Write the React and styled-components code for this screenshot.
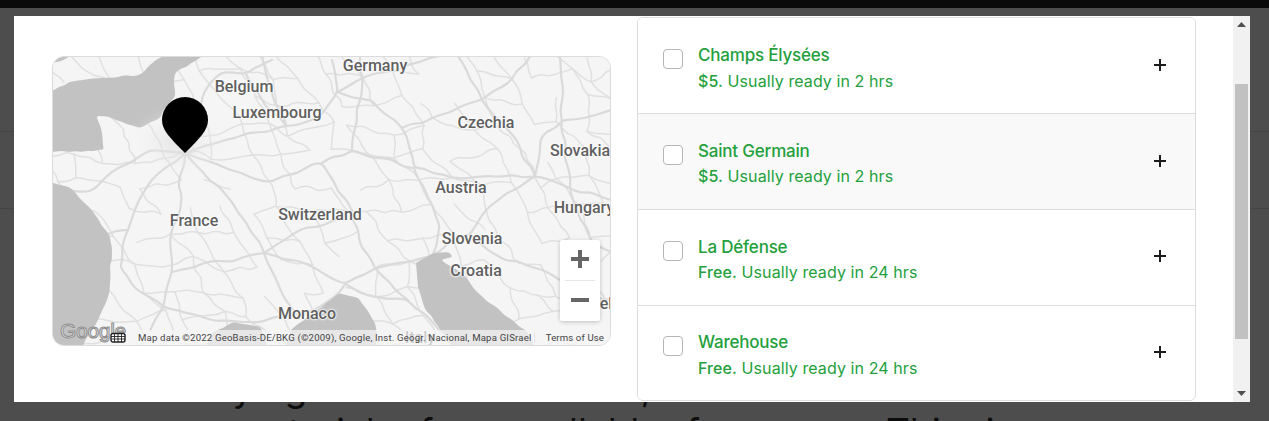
import React from "react";
import styled, { createGlobalStyle } from "styled-components";

const Global = createGlobalStyle`
  html, body { margin: 0; padding: 0; height: 100%; background: #4d4d4d; overflow: hidden; }
  #root { height: 100%; }
  * { box-sizing: border-box; }
`;

const Page = styled.div`
  position: relative;
  height: 421px;
  width: 1269px;
  overflow: hidden;
  background: #4d4d4d;
  font-family: Inter, "Liberation Sans", sans-serif;
`;
const TopBar = styled.div`
  height: 8px;
  background: #0a0a0a;
`;
const BackSection = styled.div`
  height: ${(p) => p.$h}px;
  border-bottom: 1px solid #444;
`;
const BackText = styled.div`
  font-size: 37px;
  line-height: 44px;
  color: #0d0d0d;
  white-space: nowrap;
  padding-left: ${(p) => p.$indent}px;
  word-spacing: ${(p) => p.$spread}px;
`;
const BackCopy = styled.div`
  padding-top: 157px;
`;

const Modal = styled.div`
  position: absolute;
  left: 14px;
  top: 16px;
  width: 1236px;
  height: 386px;
  background: #fff;
  display: flex;
`;
const Body = styled.div`
  flex: 1;
  display: flex;
  align-items: flex-start;
  gap: 26px;
  padding: 1px 37px 0 38px;
`;

const MapFrame = styled.div`
  position: relative;
  width: 559px;
  height: 290px;
  margin-top: 39px;
  flex: none;
  border: 1px solid #dcdcdc;
  border-radius: 12px;
  overflow: hidden;
  background: #f5f5f5;
`;
const MapArt = styled.svg`
  position: absolute;
  left: -1px;
  top: -1px;
  display: block;
`;
const MapLabel = styled.span`
  position: absolute;
  left: ${(p) => p.$x - 53}px;
  top: ${(p) => p.$y - 57}px;
  transform: translate(-50%, -50%);
  font-family: Roboto, sans-serif;
  font-weight: 500;
  font-size: 16px;
  line-height: 18px;
  color: #5f5f5f;
  white-space: nowrap;
  text-shadow: 0 0 2px #fff, 0 0 2px #fff, 0 0 3px #fff;
`;
const GoogleMark = styled.span`
  position: absolute;
  left: 7px;
  bottom: 2px;
  font-family: "Liberation Sans", sans-serif;
  font-size: 21px;
  line-height: 24px;
  font-weight: 400;
  letter-spacing: -0.3px;
  color: #e6e6e6;
  -webkit-text-stroke: 1px #8e8e8e;
`;
const Attribution = styled.div`
  position: absolute;
  right: 0;
  bottom: 0;
  height: 15px;
  width: 480px;
  padding: 0 6px 0 8px;
  background: rgba(245, 245, 245, 0.72);
  display: flex;
  align-items: center;
  justify-content: space-between;
  font-family: Roboto, sans-serif;
  font-size: 9.6px;
  letter-spacing: 0.18px;
  color: #444;
  white-space: nowrap;
`;
const TermsLink = styled.span`
  padding-left: 11px;
  letter-spacing: 0.12px;
  border-left: 1px solid #e4e4e4;
`;
const Keyboard = styled.svg`
  position: absolute;
  left: 57px;
  bottom: 2px;
`;
const ZoomControl = styled.div`
  position: absolute;
  left: 507px;
  top: 183px;
  width: 40px;
  height: 81px;
  background: #fff;
  border-radius: 2px;
  box-shadow: 0 1px 4px rgba(0, 0, 0, 0.22);
  display: flex;
  flex-direction: column;
  align-items: center;
`;
const ZoomButton = styled.div`
  height: 40px;
  width: 100%;
  padding-bottom: 2px;
  display: flex;
  align-items: center;
  justify-content: center;
  flex: none;
`;
const ZoomDivider = styled.div`
  width: 30px;
  height: 1px;
  background: #e6e6e6;
  flex: none;
`;

const List = styled.div`
  flex: 1;
  height: 384px;
  border: 1px solid #dcdcdc;
  border-radius: 6px;
  overflow: hidden;
`;
const Row = styled.div`
  height: 96px;
  display: flex;
  align-items: flex-start;
  padding: ${(p) => p.$top}px 29px 0 25px;
  background: ${(p) => (p.$shaded ? "#f9f9f9" : "#fff")};
  border-bottom: 1px solid #dcdcdc;
  &:last-child { border-bottom: 0; }
`;
const Check = styled.span`
  width: 20px;
  height: 20px;
  flex: none;
  margin-top: 6px;
  margin-right: 15px;
  border: 1px solid #b5b5b5;
  border-radius: 4px;
  background: #fff;
`;
const RowText = styled.div`
  flex: 1;
  color: #23a03c;
`;
const RowTitle = styled.div`
  font-size: 17px;
  line-height: 24px;
  font-weight: 500;
  letter-spacing: -0.2px;
`;
const RowSub = styled.div`
  font-size: 16px;
  line-height: 26px;
  letter-spacing: 0.09px;
  margin-top: ${(p) => p.$gap}px;
`;
const Price = styled.span`
  font-weight: 500;
`;
const Plus = styled.svg`
  flex: none;
  margin-top: ${(p) => p.$offset}px;
`;

const Scrollbar = styled.div`
  width: 17px;
  flex: none;
  height: 100%;
  background: #f1f1f1;
  display: flex;
  flex-direction: column;
  align-items: center;
  position: relative;
`;
const ArrowZone = styled.div`
  height: 17px;
  width: 100%;
  flex: none;
  display: flex;
  align-items: center;
  justify-content: center;
`;
const Track = styled.div`
  flex: 1;
  width: 100%;
  padding: 51px 2px 46px;
`;
const Thumb = styled.div`
  height: 100%;
  background: #c1c1c1;
`;

/* map drawing helpers: organic, seeded roads and coast lines */
let seed = 7;
const rnd = () => {
  seed = (seed * 16807) % 2147483647;
  return seed / 2147483647;
};
const wiggle = (pts, amp, step) => {
  const out = [pts[0]];
  for (let i = 1; i < pts.length; i++) {
    const [ax, ay] = pts[i - 1];
    const [bx, by] = pts[i];
    const len = Math.hypot(bx - ax, by - ay);
    const n = Math.max(1, Math.round(len / step));
    for (let k = 1; k <= n; k++) {
      const t = k / n;
      const j = k === n ? 0 : (rnd() - 0.5) * 2 * amp;
      out.push([ax + (bx - ax) * t - ((by - ay) / (len || 1)) * j, ay + (by - ay) * t + ((bx - ax) / (len || 1)) * j]);
    }
  }
  return out;
};
const smooth = (pts, close) => {
  let d = `M${pts[0][0].toFixed(1)} ${pts[0][1].toFixed(1)}`;
  for (let i = 1; i < pts.length - 1; i++) {
    const mx = (pts[i][0] + pts[i + 1][0]) / 2;
    const my = (pts[i][1] + pts[i + 1][1]) / 2;
    d += `Q${pts[i][0].toFixed(1)} ${pts[i][1].toFixed(1)} ${mx.toFixed(1)} ${my.toFixed(1)}`;
  }
  const last = pts[pts.length - 1];
  d += `L${last[0].toFixed(1)} ${last[1].toFixed(1)}`;
  return close ? d + "Z" : d;
};
const parse = (s) =>
  s
    .split("M")
    .filter(Boolean)
    .map((sub) => sub.trim().split(" L").map((p) => p.trim().split(" ").map(Number)));
const roadsFrom = (list, amp, step) => list.flatMap(parse).map((pts) => smooth(wiggle(pts, amp, step)));

const majorData = [
  "M185 153 L180 175 L181 205 L170 238 L172 272 L164 305 L150 331",
  "M185 153 L203 172 L226 195 L246 222 L264 253 L278 284 L298 316",
  "M185 153 L160 172 L140 198 L128 230 L120 268 L140 292 L165 308 L205 318 L250 322 L298 316",
  "M185 153 L150 150 L118 168 L98 186 L82 192 L60 188",
  "M185 153 L196 120 L204 92 L222 72 L246 74 L272 60",
  "M185 153 L225 140 L258 132 L286 126 L318 118 L338 92 L332 60",
  "M286 126 L264 104 L246 74",
  "M185 153 L230 170 L272 182 L306 168 L322 163 L338 192 L352 210 L362 248 L375 268",
  "M264 253 L296 232 L330 222 L352 210",
  "M338 92 L372 100 L402 128 L414 168 L452 178 L490 176 L535 176 L570 188 L611 200",
  "M322 163 L352 150 L380 158 L414 168",
  "M402 128 L440 115 L482 100 L512 80 L530 56",
  "M482 100 L508 130 L535 176",
  "M535 176 L540 140 L562 120 L611 110",
  "M338 92 L372 74 L420 62 L440 56",
  "M264 253 L302 262 L345 284 L375 268 L410 262 L432 256 L452 238 L470 234",
  "M470 234 L498 256 L536 268 L580 290 L611 300",
  "M470 234 L490 206 L535 176",
  "M345 284 L368 296 L408 300 L440 331",
  "M375 268 L395 290 L408 300",
  "M414 168 L428 198 L440 225 L432 256",
  "M298 316 L330 300 L345 284",
  "M570 188 L590 240 L611 252",
  "M262 56 L272 92 L286 126",
  "M458 56 L470 80 L482 100",
  "M55 232 L80 240 L104 236 L128 230",
  "M172 272 L205 262 L232 262 L264 253",
  "M360 56 L362 90 L352 150",
  "M560 56 L562 120 L570 188",
];
const major = roadsFrom(majorData, 2.4, 11);

/* the secondary network: a jittered lattice of towns joined by small roads */
const buildLattice = () => {
  const sx = 30;
  const sy = 27;
  const rowsCount = 12;
  const colsCount = 20;
  const nodes = [];
  for (let r = 0; r < rowsCount; r++) {
    const line = [];
    for (let c = 0; c < colsCount; c++) {
      line.push([40 + c * sx + (r % 2 ? 15 : 0) + (rnd() - 0.5) * 20, 48 + r * sy + (rnd() - 0.5) * 16]);
    }
    nodes.push(line);
  }
  const paths = [];
  for (let r = 0; r < rowsCount; r++) {
    for (let c = 0; c < colsCount; c++) {
      if (c < colsCount - 1 && rnd() < 0.72) paths.push(smooth(wiggle([nodes[r][c], nodes[r][c + 1]], 2.6, 8)));
      if (r < rowsCount - 1 && rnd() < 0.8) {
        const to = nodes[r + 1][r % 2 ? Math.min(c + 1, colsCount - 1) : c];
        paths.push(smooth(wiggle([nodes[r][c], to], 2.6, 8)));
      }
    }
  }
  return paths;
};
const lattice = buildLattice();

const coast = (pts) => smooth(wiggle(pts, 1.1, 6), true);
const water = [
  [[212,50],[175,73],[175,97],[163,110],[161,117],[139,128],[110,117],[96,116],[102,133],[104,150],[82,152],[50,152],[50,93],[69,82],[106,78],[139,75],[169,50]],
  [[50,50],[71,50],[71,56],[62,61],[50,62]],
  [[50,182],[69,187],[92,210],[110,237],[112,247],[108,297],[98,320],[80,350],[50,350]],
  [[212,333],[233,322],[261,327],[268,350],[205,350]],
  [[290,331],[322,307],[339,293],[359,298],[375,323],[378,350],[285,350]],
  [[416,263],[433,253],[449,252],[453,257],[441,260],[461,273],[478,293],[502,313],[527,331],[535,350],[455,350],[424,307],[418,287]],
].map(coast);

function MapDrawing() {
  return (
    <MapArt width="559" height="290" viewBox="52 56 559 290">
      <defs>
        <radialGradient id="halo">
          <stop offset="0" stopColor="#dcdcdc" />
          <stop offset="1" stopColor="#f5f5f5" stopOpacity="0" />
        </radialGradient>
      </defs>
      <rect x="52" y="56" width="559" height="290" fill="#f5f5f5" />
      <g fill="none" stroke="#e0e0e0" strokeWidth="1.5" strokeLinejoin="round" strokeLinecap="round">
        {lattice.map((d, i) => (
          <path key={i} d={d} />
        ))}
      </g>
      <g fill="none" stroke="#dadada" strokeWidth="2.2" strokeLinejoin="round" strokeLinecap="round">
        {major.map((d, i) => (
          <path key={i} d={d} />
        ))}
      </g>
      <g fill="#c2c2c2">
        {water.map((d, i) => (
          <path key={i} d={d} />
        ))}
      </g>
      <ellipse cx="178" cy="142" rx="50" ry="36" fill="url(#halo)" opacity="0.7" />
      <path d="M185 153 C170 138 162 130 162 120 A23 23 0 0 1 208 120 C208 130 200 138 185 153 Z" fill="#000" />
    </MapArt>
  );
}

const labels = [
  ["Germany", 375, 66],
  ["Belgium", 244, 87],
  ["Luxembourg", 277, 113],
  ["Czechia", 486, 123],
  ["Slovakia", 580, 151],
  ["Austria", 461, 188],
  ["Hungary", 584, 208],
  ["France", 194, 221],
  ["Switzerland", 320, 215],
  ["Slovenia", 472, 239],
  ["Croatia", 476, 271],
  ["Monaco", 307, 314],
  ["Italy", 420, 338],
  ["el", 606, 304],
];

const rows = [
  { name: "Champs Élysées", price: "$5.", rest: " Usually ready in 2 hrs", top: 25, gap: 1, plus: 16 },
  { name: "Saint Germain", price: "$5.", rest: " Usually ready in 2 hrs", top: 25, gap: 0, plus: 16, shaded: true },
  { name: "La Défense", price: "Free.", rest: " Usually ready in 24 hrs", top: 25, gap: 0, plus: 15 },
  { name: "Warehouse", price: "Free.", rest: " Usually ready in 24 hrs", top: 24, gap: 1, plus: 16 },
];

export default function App() {
  return (
    <Page>
      <Global />
      <TopBar />
      <BackSection $h={124} />
      <BackSection $h={77} />
      <BackCopy>
        <BackText $indent={157} $spread={0}>Many again and the old one, as</BackText>
        <BackText $indent={235} $spread={15}>materials from callable for more. This is</BackText>
      </BackCopy>
      <Modal>
        <Body>
          <MapFrame>
            <MapDrawing />
            {labels.map(([t, x, y]) => (
              <MapLabel key={t} $x={x} $y={y}>{t}</MapLabel>
            ))}
            <ZoomControl>
              <ZoomButton>
                <svg width="20" height="20" viewBox="0 0 20 20"><path d="M8 1h4v7h7v4h-7v7H8v-7H1V8h7z" fill="#666" /></svg>
              </ZoomButton>
              <ZoomDivider />
              <ZoomButton>
                <svg width="20" height="20" viewBox="0 0 20 20"><path d="M1 8h18v4H1z" fill="#666" /></svg>
              </ZoomButton>
            </ZoomControl>
            <GoogleMark>Google</GoogleMark>
            <Attribution>
              <span>Map data ©2022 GeoBasis-DE/BKG (©2009), Google, Inst. Geogr. Nacional, Mapa GISrael</span>
              <TermsLink>Terms of Use</TermsLink>
            </Attribution>
            <Keyboard width="16" height="11" viewBox="0 0 16 11">
              <rect x="1" y="1.5" width="14" height="8.5" rx="2" fill="#fff" stroke="#222" strokeWidth="1.4" />
              <path d="M1 4.5h14M1 7h14M4.5 2v8M8 2v8M11.5 2v8" stroke="#222" strokeWidth="0.9" />
            </Keyboard>
          </MapFrame>
          <List>
            {rows.map((r) => (
              <Row key={r.name} $top={r.top} $shaded={r.shaded}>
                <Check />
                <RowText>
                  <RowTitle>{r.name}</RowTitle>
                  <RowSub $gap={r.gap}><Price>{r.price}</Price>{r.rest}</RowSub>
                </RowText>
                <Plus $offset={r.plus} width="12" height="12" viewBox="0 0 12 12"><path d="M6 0v12M0 6h12" stroke="#1c1c1c" strokeWidth="2" /></Plus>
              </Row>
            ))}
          </List>
        </Body>
        <Scrollbar>
          <ArrowZone>
            <svg width="9" height="5" viewBox="0 0 9 5"><path d="M4.5 0L9 5H0z" fill="#505050" /></svg>
          </ArrowZone>
          <Track><Thumb /></Track>
          <ArrowZone>
            <svg width="9" height="5" viewBox="0 0 9 5"><path d="M4.5 5L9 0H0z" fill="#505050" /></svg>
          </ArrowZone>
        </Scrollbar>
      </Modal>
    </Page>
  );
}
